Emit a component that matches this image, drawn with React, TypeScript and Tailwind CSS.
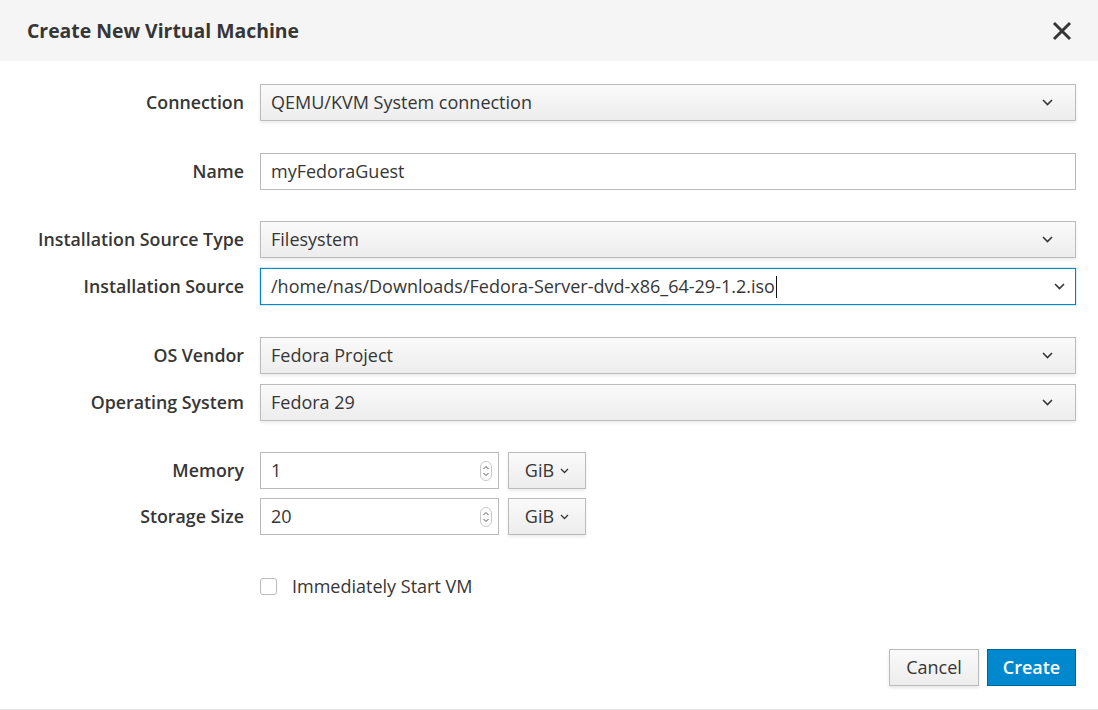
import React from "react";

const font = { fontFamily: '"Open Sans", "Noto Sans", sans-serif' };

function Chevron({ className = "" }: { className?: string }) {
  return (
    <svg width="11" height="7" viewBox="0 0 11 7" className={className}>
      <path d="M1 1l4.5 4.5L10 1" fill="none" stroke="#363636" strokeWidth="1.6" />
    </svg>
  );
}

function Select({ value }: { value: string }) {
  return (
    <div className="flex h-[37px] flex-1 items-center justify-between border border-[#bbbbbb] bg-gradient-to-b from-[#fafafa] to-[#ededed] pl-[10px] pr-[22px] text-[18px] text-[#363636] shadow-[0_2px_3px_rgba(3,3,3,0.08)]">
      <span>{value}</span>
      <Chevron />
    </div>
  );
}

function Row({ label, children }: { label: string; children: React.ReactNode }) {
  return (
    <div className="flex items-center">
      <div className="w-[260px] shrink-0 pr-[16px] text-right text-[17.8px] font-semibold text-[#363636]">{label}</div>
      <div className="flex flex-1 items-center pr-[22px]">{children}</div>
    </div>
  );
}

function NumberField({ value }: { value: string }) {
  return (
    <div className="flex items-center gap-[9px]">
      <div className="flex h-[37px] w-[239px] items-center justify-between border border-[#bababa] bg-white pl-[10px] pr-[6px] text-[18px] text-[#363636]">
        <span>{value}</span>
        <svg width="12" height="20" viewBox="0 0 12 20">
          <rect x="0.5" y="0.5" width="11" height="19" rx="5.5" fill="#fff" stroke="#c8c8c8" />
          <path d="M3.5 8l2.5-2.5L8.5 8M3.5 12l2.5 2.5L8.5 12" fill="none" stroke="#555" strokeWidth="1" />
        </svg>
      </div>
      <div className="flex h-[37px] w-[78px] items-center justify-center gap-[6px] border border-[#bbbbbb] bg-gradient-to-b from-[#fafafa] to-[#ededed] text-[18px] text-[#363636] shadow-[0_2px_3px_rgba(3,3,3,0.08)]">
        <span>GiB</span>
        <svg width="9" height="6" viewBox="0 0 9 6">
          <path d="M1 1l3.5 3.5L8 1" fill="none" stroke="#363636" strokeWidth="1.3" />
        </svg>
      </div>
    </div>
  );
}

export default function App() {
  return (
    <div className="flex h-[710px] w-[1098px] flex-col bg-white" style={font}>
      <div className="flex h-[61px] shrink-0 items-center justify-between bg-[#f5f5f5] pl-[27px] pr-[26px]">
        <h1 className="text-[19.4px] font-bold text-[#363636]">Create New Virtual Machine</h1>
        <svg width="20" height="20" viewBox="0 0 20 20">
          <path d="M2 2l16 16M18 2L2 18" stroke="#363636" strokeWidth="3" />
        </svg>
      </div>
      <div className="flex flex-1 flex-col pt-[23px]">
        <Row label="Connection">
          <Select value="QEMU/KVM System connection" />
        </Row>
        <div className="h-[32px]" />
        <Row label="Name">
          <div className="flex h-[37px] flex-1 items-center border border-[#bababa] bg-white pl-[10px] text-[18px] text-[#363636]">
            myFedoraGuest
          </div>
        </Row>
        <div className="h-[31px]" />
        <Row label="Installation Source Type">
          <Select value="Filesystem" />
        </Row>
        <div className="h-[10px]" />
        <Row label="Installation Source">
          <div className="flex h-[37px] flex-1 items-center justify-between border border-[#0088ce] bg-white pl-[10px] pr-[10px] text-[18px] text-[#363636] shadow-[0_0_0_1px_rgba(0,136,206,0.15)]">
            <span className="flex items-center">
              /home/nas/Downloads/Fedora-Server-dvd-x86_64-29-1.2.iso
              <span className="ml-[1px] inline-block h-[22px] w-[1.5px] bg-[#111]" />
            </span>
            <Chevron />
          </div>
        </Row>
        <div className="h-[32px]" />
        <Row label="OS Vendor">
          <Select value="Fedora Project" />
        </Row>
        <div className="h-[10px]" />
        <Row label="Operating System">
          <Select value="Fedora 29" />
        </Row>
        <div className="h-[31px]" />
        <Row label="Memory">
          <NumberField value="1" />
        </Row>
        <div className="h-[9px]" />
        <Row label="Storage Size">
          <NumberField value="20" />
        </Row>
        <div className="h-[38px]" />
        <div className="flex items-center pl-[260px]">
          <div className="h-[17px] w-[17px] rounded-[3px] border border-[#bbbbbb] bg-white" />
          <span className="ml-[15px] text-[18px] text-[#363636]">Immediately Start VM</span>
        </div>
        <div className="flex flex-1 items-end justify-end gap-[8px] pb-[23px] pr-[22px]">
          <button className="h-[37px] w-[90px] border border-[#bbbbbb] bg-gradient-to-b from-[#fafafa] to-[#ededed] text-[18px] text-[#363636] shadow-[0_2px_3px_rgba(3,3,3,0.1)]">
            Cancel
          </button>
          <button className="h-[37px] w-[89px] border border-[#00659c] bg-[#0088ce] text-[18px] font-semibold text-white">
            Create
          </button>
        </div>
        <div className="h-[1px] bg-[#e5e5e5]" />
      </div>
    </div>
  );
}
